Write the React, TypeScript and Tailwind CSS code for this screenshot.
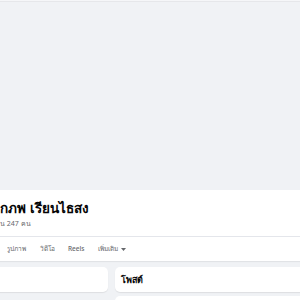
export default function App() {
  const tabs = ["รูปภาพ", "วิดีโอ", "Reels"]

  return (
    <div
      className="w-[300px] h-[300px] overflow-hidden bg-[#f0f2f5] flex flex-col"
      style={{ fontFamily: '"Noto Sans", "Liberation Sans", sans-serif' }}
    >
      {/* top nav shadow */}
      <div className="h-[1px] shrink-0 bg-[#f5f6f8]" />
      <div className="h-[1px] shrink-0 bg-[#e6e7ea]" />

      {/* cover */}
      <div className="h-[188px] shrink-0 bg-[#f0f2f5]" />

      {/* profile header */}
      <div className="bg-white shrink-0">
        <div className="h-[47px] border-b border-[#e4e6eb] pt-[9px]">
          <h1 className="text-[13.5px] leading-[19px] font-bold text-[#050505]">กภพ เรียนไธสง</h1>
          <p className="text-[7px] leading-[10px] text-[#65676b] mt-[1px]">น 247 คน</p>
        </div>
        <div className="h-[24px] flex items-center gap-[13.5px] pl-[7px] text-[6.5px] text-[#65676b] font-medium shadow-[0_1px_1px_rgba(0,0,0,0.06)]">
          {tabs.map((t) => (
            <span key={t}>{t}</span>
          ))}
          <span className="flex items-center gap-[3px]">
            เพิ่มเติม
            <svg width="5" height="3" viewBox="0 0 5 3">
              <path d="M0 0h5L2.5 3z" fill="#65676b" />
            </svg>
          </span>
        </div>
      </div>

      {/* content */}
      <div className="flex gap-[7px] pt-[6px] shrink-0">
        <div className="w-[116px] -ml-[8px] shrink-0">
          <div className="h-[25px] bg-white rounded-[5px] shadow-[0_1px_1px_rgba(0,0,0,0.08)]" />
        </div>
        <div className="flex-1 flex flex-col gap-[4px] -mr-[8px]">
          <div className="h-[25px] bg-white rounded-[5px] shadow-[0_1px_1px_rgba(0,0,0,0.08)] flex items-center pl-[6px]">
            <span className="text-[9px] font-bold text-[#050505]">โพสต์</span>
          </div>
          <div className="h-[40px] bg-white rounded-[5px]" />
        </div>
      </div>
    </div>
  )
}
